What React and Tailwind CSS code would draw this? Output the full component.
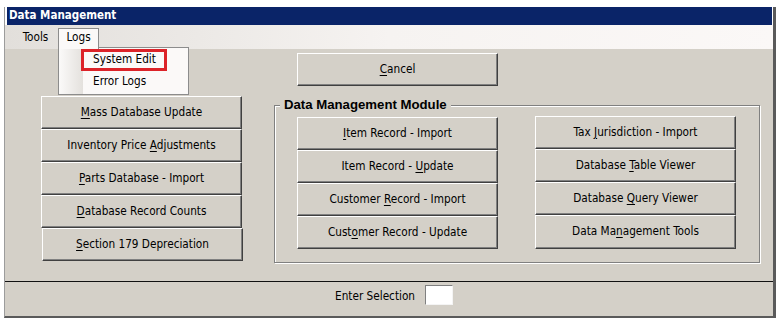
import React from "react";

const F = "font-['DejaVu_Sans_Condensed','Liberation_Sans',sans-serif]";

function Btn({ children, className = "" }) {
  return (
    <div
      className={`flex items-center justify-center h-[33px] w-[201px] bg-[#d4d0c8] border border-t-white border-l-white border-r-[#404040] border-b-[#404040] shadow-[inset_-1px_-1px_0_#808080] text-[11.7px] text-black leading-none ${className}`}
    >
      {children}
    </div>
  );
}

const U = ({ children }) => <span className="underline underline-offset-[2px]">{children}</span>;

export default function App() {
  return (
    <div className={`relative w-[777px] h-[321px] bg-white pt-[7px] pl-[4px] ${F}`}>
      <div className="w-[772px] flex flex-col border-l border-l-[#9c9c9c] border-r-[3px] border-r-[#5a5a5a] border-b-[2px] border-b-[#5a5a5a]">
        {/* title */}
        <div className="ml-[2px] mr-[1px] h-[18px] bg-[#0a2468] flex items-center pl-[2px] text-white font-bold text-[11.5px]">
          Data Management
        </div>
        {/* menu */}
        <div className="h-[24px] flex items-start pt-[3px] bg-gradient-to-r from-[#e2dfdb] via-[#f6f3f1] to-[#fbf8f7] text-[11.7px]">
          <div className="ml-[12px] w-[37px] h-[20px] flex items-center justify-center">Tools</div>
          <div className="ml-[4px] w-[41px] h-[21px] flex items-center justify-center relative z-10 bg-[#fbf9f8] border border-b-0 border-[#8c8c8c] pb-[2px]">
            Logs
          </div>
        </div>
        {/* content */}
        <div className="h-[267px] bg-[#d4d0c8] flex flex-col">
          <div className="flex items-start">
            <div className="ml-[36px] mt-[47px] flex flex-col">
              <Btn><span><U>M</U>ass Database Update</span></Btn>
              <Btn><span>Inventory Price <U>A</U>djustments</span></Btn>
              <Btn><span><U>P</U>arts Database - Import</span></Btn>
              <Btn><span><U>D</U>atabase Record Counts</span></Btn>
              <Btn className="ml-[1px]"><span><U>S</U>ection 179 Depreciation</span></Btn>
            </div>
            <div className="ml-[31px] mt-[4px] flex flex-col">
              <Btn className="ml-[23px] h-[32px]"><span><U>C</U>ancel</span></Btn>
              <div className="relative mt-[19px] w-[486px] h-[158px] border border-[#808080] shadow-[inset_1px_1px_0_#fff,1px_1px_0_#fff] flex pt-[11px] pl-[22px]">
                <span className="absolute left-[5px] top-[-9px] px-[4px] bg-[#d4d0c8] font-['Liberation_Sans',sans-serif] font-bold text-[13.2px] leading-[16px]">
                  Data Management Module
                </span>
                <div className="flex flex-col">
                  <Btn><span><U>I</U>tem Record - Import</span></Btn>
                  <Btn><span>Item Record - <U>U</U>pdate</span></Btn>
                  <Btn><span>Customer <U>R</U>ecord - Import</span></Btn>
                  <Btn><span>Cust<U>o</U>mer Record - Update</span></Btn>
                </div>
                <div className="flex flex-col ml-[37px] mt-[-1px]">
                  <Btn><span>Tax <U>J</U>urisdiction - Import</span></Btn>
                  <Btn><span>Database <U>T</U>able Viewer</span></Btn>
                  <Btn><span>Database <U>Q</U>uery Viewer</span></Btn>
                  <Btn className="h-[34px]"><span>Data Ma<U>n</U>agement Tools</span></Btn>
                </div>
              </div>
            </div>
          </div>
          <div className="mt-[18px] h-[1px] bg-[#111]" />
          <div className="mt-[3px] flex items-center pl-[330px] text-[11.7px]">
            <span className="mt-[3px]">Enter Selection</span>
            <div className="ml-[10px] w-[28px] h-[20px] bg-white border border-t-[#808080] border-l-[#808080] border-b-[#f4f4f4] border-r-[#f4f4f4]" />
          </div>
        </div>
      </div>
      {/* dropdown */}
      <div className="absolute left-[58px] top-[47px] w-[131px] h-[48px] border border-[#8c8c8c] bg-[#fbf9f8] text-[11.7px] flex flex-col pt-[1px]">
        <div className="absolute left-0 top-0 bottom-0 w-[24px] bg-gradient-to-r from-[#fbfaf9] to-[#e4e1dd]" />
        <div className="relative ml-[22px] w-[86px] h-[22px] border-[3px] border-[#dc2329] flex items-center pl-[9px]">
          System Edit
        </div>
        <div className="relative ml-[22px] h-[22px] flex items-center pl-[12px]">Error Logs</div>
      </div>
    </div>
  );
}
